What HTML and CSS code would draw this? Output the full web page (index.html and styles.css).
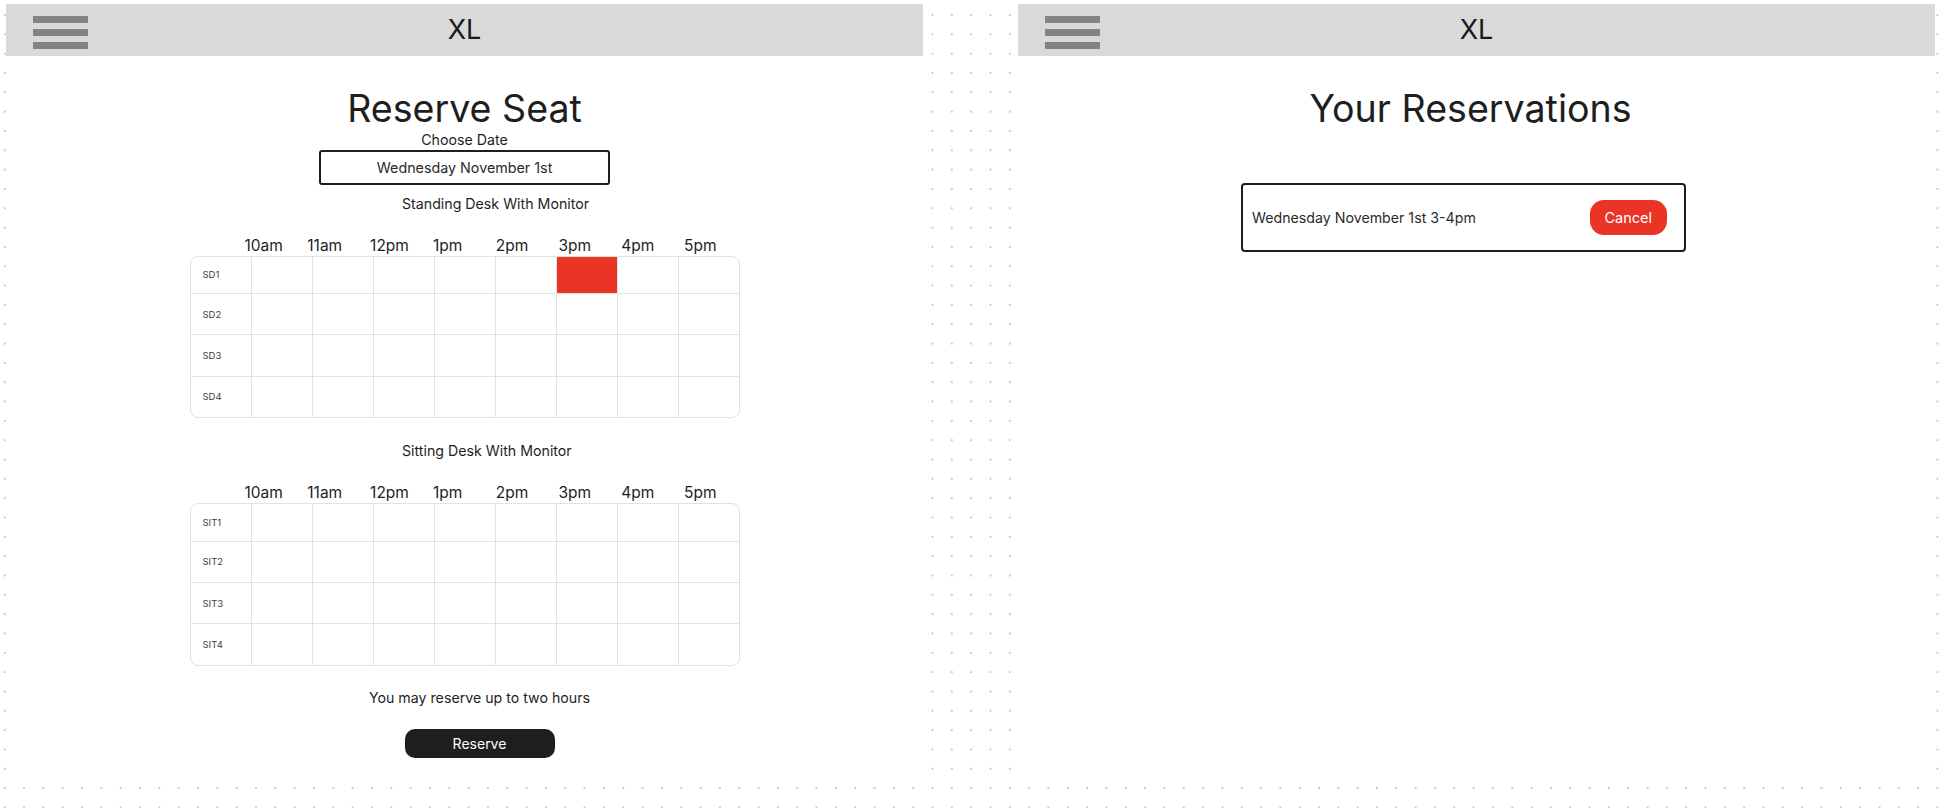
FILE: index.html
```html
<!DOCTYPE html>
<html lang="en">
<head>
<meta charset="utf-8">
<title>Reserve Seat</title>
<link rel="stylesheet" href="styles.css">
</head>
<body>
<div class="canvas">
  <section class="frame">
    <header class="topbar">
      <div class="burger"><span></span><span></span><span></span></div>
      <div class="brand">XL</div>
      <div></div>
    </header>
    <div class="page page-reserve">
      <h1 class="title">Reserve Seat</h1>
      <div class="choose">Choose Date</div>
      <div class="datebox">Wednesday November 1st</div>

      <div class="section">
        <div class="section-title">Standing Desk With Monitor</div>
        <div class="hours">
          <span>10am</span><span>11am</span><span>12pm</span><span>1pm</span><span>2pm</span><span>3pm</span><span>4pm</span><span>5pm</span>
        </div>
        <div class="table">
          <div class="row r1"><div class="cell lab">SD1</div><div class="cell"></div><div class="cell"></div><div class="cell"></div><div class="cell"></div><div class="cell"></div><div class="cell sel"></div><div class="cell"></div><div class="cell"></div></div>
          <div class="row"><div class="cell lab">SD2</div><div class="cell"></div><div class="cell"></div><div class="cell"></div><div class="cell"></div><div class="cell"></div><div class="cell"></div><div class="cell"></div><div class="cell"></div></div>
          <div class="row"><div class="cell lab">SD3</div><div class="cell"></div><div class="cell"></div><div class="cell"></div><div class="cell"></div><div class="cell"></div><div class="cell"></div><div class="cell"></div><div class="cell"></div></div>
          <div class="row"><div class="cell lab">SD4</div><div class="cell"></div><div class="cell"></div><div class="cell"></div><div class="cell"></div><div class="cell"></div><div class="cell"></div><div class="cell"></div><div class="cell"></div></div>
        </div>
      </div>

      <div class="section section2">
        <div class="section-title">Sitting Desk With Monitor</div>
        <div class="hours">
          <span>10am</span><span>11am</span><span>12pm</span><span>1pm</span><span>2pm</span><span>3pm</span><span>4pm</span><span>5pm</span>
        </div>
        <div class="table">
          <div class="row r1"><div class="cell lab">SIT1</div><div class="cell"></div><div class="cell"></div><div class="cell"></div><div class="cell"></div><div class="cell"></div><div class="cell"></div><div class="cell"></div><div class="cell"></div></div>
          <div class="row"><div class="cell lab">SIT2</div><div class="cell"></div><div class="cell"></div><div class="cell"></div><div class="cell"></div><div class="cell"></div><div class="cell"></div><div class="cell"></div><div class="cell"></div></div>
          <div class="row"><div class="cell lab">SIT3</div><div class="cell"></div><div class="cell"></div><div class="cell"></div><div class="cell"></div><div class="cell"></div><div class="cell"></div><div class="cell"></div><div class="cell"></div></div>
          <div class="row"><div class="cell lab">SIT4</div><div class="cell"></div><div class="cell"></div><div class="cell"></div><div class="cell"></div><div class="cell"></div><div class="cell"></div><div class="cell"></div><div class="cell"></div></div>
        </div>
      </div>

      <p class="note">You may reserve up to two hours</p>
      <button class="btn-reserve">Reserve</button>
    </div>
  </section>

  <section class="frame">
    <header class="topbar">
      <div class="burger"><span></span><span></span><span></span></div>
      <div class="brand">XL</div>
      <div></div>
    </header>
    <div class="page page-list">
      <h1 class="title">Your Reservations</h1>
      <div class="card">
        <span class="card-text">Wednesday November 1st 3-4pm</span>
        <button class="btn-cancel">Cancel</button>
      </div>
    </div>
  </section>
</div>
</body>
</html>
```

FILE: styles.css
```css
* { box-sizing: border-box; }

html, body {
  margin: 0;
  padding: 0;
}

body {
  width: 1942px;
  height: 808px;
  overflow: hidden;
  font-family: "Inter", "Noto Sans", sans-serif;
  color: #1e1e1e;
  background-color: #ffffff;
  background-image: radial-gradient(circle at center, #c9c9c9 0.9px, rgba(255,255,255,0) 1.3px);
  background-size: 19.33px 19.33px;
  background-position: -4.97px 5.33px;
}

.canvas {
  display: flex;
  gap: 95px;
  padding: 4px 0 0 6px;
}

.frame {
  width: 917px;
  height: 776px;
  background: #ffffff;
  display: flex;
  flex-direction: column;
}

.topbar {
  height: 52px;
  background: #d9d9d9;
  display: grid;
  grid-template-columns: 1fr auto 1fr;
  align-items: start;
}

.burger {
  display: flex;
  flex-direction: column;
  gap: 6.5px;
  padding: 12px 0 0 27px;
}

.burger span {
  display: block;
  width: 55px;
  height: 6.5px;
  background: #838383;
}

.brand {
  font-size: 27px;
  font-weight: 400;
  line-height: 52px;
  color: #1a1a1a;
}

.page {
  display: flex;
  flex-direction: column;
  align-items: center;
}

.title {
  margin: 31px 0 0;
  font-size: 37.6px;
  font-weight: 400;
  line-height: 44px;
  color: #1e1e1e;
}

.choose {
  font-size: 14.2px;
  line-height: 17px;
  margin-top: 0;
}

.datebox {
  margin-top: 2px;
  width: 291px;
  height: 35px;
  border: 2px solid #1e1e1e;
  border-radius: 3px;
  display: flex;
  align-items: center;
  justify-content: center;
  font-size: 14.3px;
  color: #2a2a2a;
}

.section {
  width: 550px;
  margin-top: 9.5px;
  display: flex;
  flex-direction: column;
}

.section2 { margin-top: 24.3px; }

.section-title {
  font-size: 14.2px;
  line-height: 17px;
  padding-left: 212.5px;
  color: #1e1e1e;
}

.hours {
  display: flex;
  margin-top: 25px;
  padding-left: 55px;
  font-size: 15.5px;
  line-height: 18px;
  height: 19px;
}

.hours span {
  width: 62.8px;
  flex: none;
}

.table {
  border: 1px solid #e2e2e2;
  border-radius: 8px;
  overflow: hidden;
}

.row {
  display: grid;
  grid-template-columns: repeat(9, 1fr);
  height: 41.3px;
  border-top: 1px solid #e2e2e2;
}

.row.r1 {
  height: 36.5px;
  border-top: none;
}

.cell {
  border-left: 1px solid #e2e2e2;
}

.cell.lab {
  border-left: none;
  display: flex;
  align-items: center;
  padding-left: 12px;
  font-size: 9.5px;
  color: #3a3a3a;
}

.cell.sel {
  background: #ea3426;
}

.note {
  margin: 23px 0 0;
  font-size: 14.2px;
  line-height: 17px;
  padding-left: 30px;
}

.btn-reserve {
  margin: 23px 0 0 30px;
  width: 150px;
  height: 29px;
  border: none;
  border-radius: 10px;
  background: #1e1e1e;
  color: #ffffff;
  font-family: inherit;
  font-size: 14px;
}

.page-list .title {
  margin-left: -12px;
}

.card {
  margin-top: 52px;
  margin-left: -26px;
  width: 445px;
  height: 68.5px;
  border: 2px solid #1e1e1e;
  border-radius: 4px;
  display: flex;
  align-items: center;
  justify-content: space-between;
  padding: 0 17.3px 0 9px;
}

.card-text {
  font-size: 14.2px;
  color: #2a2a2a;
}

.btn-cancel {
  width: 77px;
  height: 35px;
  border: none;
  border-radius: 14px;
  background: #ea3426;
  color: #ffffff;
  font-family: inherit;
  font-size: 14.5px;
}
```
